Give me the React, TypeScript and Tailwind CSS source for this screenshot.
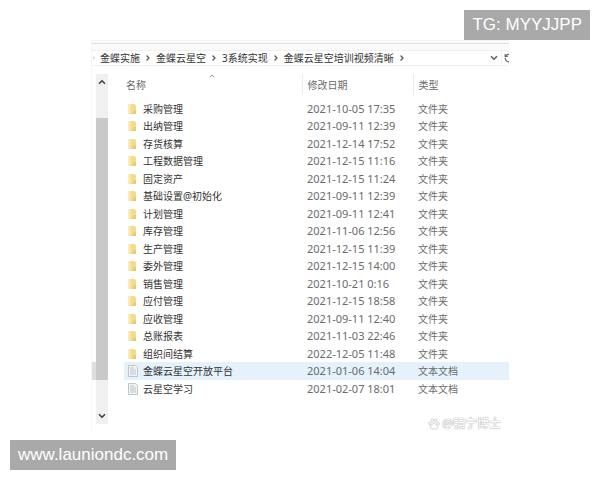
import { ChevronDown, ChevronRight, ChevronUp, RotateCw } from "lucide-react";
import clsx from "clsx";

type Entry = {
  name: string;
  date: string;
  kind: "folder" | "text";
  selected?: boolean;
};

const PATH = ["金蝶实施", "金蝶云星空", "3系统实现", "金蝶云星空培训视频清晰"];

const ENTRIES: Entry[] = [
  { name: "采购管理", date: "2021-10-05 17:35", kind: "folder" },
  { name: "出纳管理", date: "2021-09-11 12:39", kind: "folder" },
  { name: "存货核算", date: "2021-12-14 17:52", kind: "folder" },
  { name: "工程数据管理", date: "2021-12-15 11:16", kind: "folder" },
  { name: "固定资产", date: "2021-12-15 11:24", kind: "folder" },
  { name: "基础设置@初始化", date: "2021-09-11 12:39", kind: "folder" },
  { name: "计划管理", date: "2021-09-11 12:41", kind: "folder" },
  { name: "库存管理", date: "2021-11-06 12:56", kind: "folder" },
  { name: "生产管理", date: "2021-12-15 11:39", kind: "folder" },
  { name: "委外管理", date: "2021-12-15 14:00", kind: "folder" },
  { name: "销售管理", date: "2021-10-21 0:16", kind: "folder" },
  { name: "应付管理", date: "2021-12-15 18:58", kind: "folder" },
  { name: "应收管理", date: "2021-09-11 12:40", kind: "folder" },
  { name: "总账报表", date: "2021-11-03 22:46", kind: "folder" },
  { name: "组织间结算", date: "2022-12-05 11:48", kind: "folder" },
  { name: "金蝶云星空开放平台", date: "2021-01-06 14:04", kind: "text", selected: true },
  { name: "云星空学习", date: "2021-02-07 18:01", kind: "text" },
];

const FolderIcon = () => (
  <svg viewBox="0 0 12 12" className="h-3 w-3 shrink-0" aria-hidden="true">
    <path d="M1.5 1h6.5v1h1v9H1.5z" fill="#f3dc8c" />
    <path d="M1.5 1h2v10h-2z" fill="#f9ebb5" />
    <path d="M7 7h2v4H5z" fill="#e9cb72" />
  </svg>
);

const TextIcon = () => (
  <svg viewBox="0 0 12 12" className="h-3 w-3 shrink-0" aria-hidden="true">
    <path d="M1.5.5h7l2 2v9h-9z" fill="#f1f3f5" stroke="#b4b8bc" strokeWidth=".8" />
    <path d="M3 3h4M3 5h6M3 7h6M3 9h6" stroke="#b4b9be" strokeWidth=".8" />
  </svg>
);

const PawIcon = () => (
  <svg viewBox="0 0 12 12" className="h-3 w-3" fill="#fff" stroke="#c6c6c6" strokeWidth=".8" aria-hidden="true">
    <ellipse cx="1.8" cy="5.6" rx="1.2" ry="1.5" />
    <ellipse cx="4.3" cy="2.4" rx="1.2" ry="1.6" />
    <ellipse cx="7.7" cy="2.4" rx="1.2" ry="1.6" />
    <ellipse cx="10.2" cy="5.6" rx="1.2" ry="1.5" />
    <path d="M6 5.2c1.5 0 1.8 1.5 2.9 2.5 1.5 1.5.6 3.6-1.2 3.4-1.2-.2-2.2-.2-3.4 0-1.8.2-2.7-1.9-1.2-3.4C4.200 6.700 4.500 5.200 6 5.200z" />
  </svg>
);

const AddressBar = () => (
  <div className="flex h-4 items-center border-y border-[#f0f0f0]">
    <ChevronRight className="h-2 w-2 pr-1 text-[#777]" strokeWidth={3} />
    <nav aria-label="路径" className="flex flex-1 items-center gap-1 whitespace-nowrap text-[#333]">
      {PATH.map((part) => (
        <span key={part} className="flex items-center gap-1">
          <a href="#">{part}</a>
          <ChevronRight className="h-2 w-2 text-[#555]" strokeWidth={4} />
        </span>
      ))}
    </nav>
    <button aria-label="历史记录" className="mr-0.5">
      <ChevronDown className="h-2.5 w-2.5 text-[#666]" strokeWidth={4} />
    </button>
    <button aria-label="刷新" className="h-4 w-2 overflow-hidden border-l border-[#eee] pl-0.5">
      <RotateCw className="h-2.5 w-2.5 -scale-x-100 text-[#666]" strokeWidth={3} />
    </button>
  </div>
);

const ScrollBar = () => (
  <div className="flex w-3 flex-col bg-[#f0f0f0]">
    <button aria-label="向上滚动" className="flex h-[44px] justify-center pt-[3px]">
      <ChevronUp className="h-2.5 w-2.5 text-[#444]" strokeWidth={4} />
    </button>
    <div className="flex-1 bg-[#c9c9c9]" />
    <button aria-label="向下滚动" className="flex h-[44px] items-end justify-center pb-[3px]">
      <ChevronDown className="h-2.5 w-2.5 text-[#444]" strokeWidth={4} />
    </button>
  </div>
);

const FileTable = () => (
  <table className="w-full table-fixed border-collapse whitespace-nowrap text-left text-[#6b6b6b]">
    <colgroup>
      <col className="w-[178px]" />
      <col className="w-[111px]" />
      <col />
    </colgroup>
    <thead>
      <tr className="h-[21px]">
        <th className="relative p-0 pl-0.5 font-normal">
          名称
          <ChevronUp className="absolute -top-0.5 left-[84px] h-2 w-2 text-[#999]" strokeWidth={3} />
        </th>
        <th className="border-l border-[#e5edf0] p-0 pl-[5px] font-normal">修改日期</th>
        <th className="border-l border-[#e5edf0] p-0 pl-[5px] font-normal">类型</th>
      </tr>
      <tr className="h-[5px]">
        <td colSpan={3} className="p-0" />
      </tr>
    </thead>
    <tbody>
      {ENTRIES.map((entry) => (
        <tr
          key={entry.name}
          className={clsx("odd:h-[17px] even:h-[18px]", entry.selected && "bg-[#e5f1fb]")}
        >
          <td className="p-0 pl-[3px]">
            <div className="flex items-center gap-1 text-[#333]">
              {entry.kind === "folder" ? <FolderIcon /> : <TextIcon />}
              {entry.name}
            </div>
          </td>
          <td className="p-0 pl-[5px] text-[11px]">{entry.date}</td>
          <td className="p-0 pl-[5px]">{entry.kind === "folder" ? "文件夹" : "文本文档"}</td>
        </tr>
      ))}
    </tbody>
  </table>
);

export default function App() {
  return (
    <div className="relative min-h-screen bg-white pt-10 font-['Noto_Sans','Noto_Sans_CJK_SC',sans-serif] text-[10px] leading-[16px]">
      <main className="mx-[91px] min-h-[390px] border-l border-[#f6f6f6]">
        <div className="h-[10px] border-t border-[#f4f4f4] bg-[#fafafa] pt-[2px]">
          <div className="border-t border-[#e0e0e0]" />
        </div>
        <AddressBar />
        <div className="mt-2 flex h-[350px]">
          {/* edge of the navigation pane */}
          <div className="flex w-1 flex-col justify-end pb-[44px]">
            <div className="h-[18px] bg-[#dedede]" />
          </div>
          <ScrollBar />
          <div className="ml-4 flex-1">
            <FileTable />
          </div>
        </div>
        <div className="-mt-2 flex items-center justify-end gap-0.5 pr-2 text-[12px] font-medium text-white [text-shadow:0_0_1px_#999,0_0_1px_#aaa]">
          <PawIcon />
          <span>@强宁博士</span>
        </div>
      </main>

      <div className="absolute right-2.5 top-2.5 bg-[#a9a9a9] px-2 font-['Liberation_Sans',sans-serif] text-[17px] leading-[30px] text-white">
        TG: MYYJJPP
      </div>
      <a
        href="#"
        className="absolute bottom-2.5 left-2.5 bg-[#a9a9a9] px-2 font-['Liberation_Sans',sans-serif] text-[17px] leading-[30px] text-white"
      >
        www.launiondc.com
      </a>
    </div>
  );
}
